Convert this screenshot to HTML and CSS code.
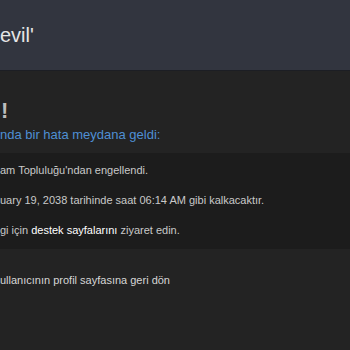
FILE: index.html
```html
<!DOCTYPE html>
<html lang="tr">
<head>
<meta charset="utf-8">
<link rel="stylesheet" href="styles.css">
</head>
<body>
<header class="page-header">
  <h1 class="page-title">evil'</h1>
</header>
<main class="content">
  <h2 class="error-title">!</h2>
  <h3 class="error-subtitle">nda bir hata meydana geldi:</h3>
  <div class="error-box">
    <p class="error-line">am Topluluğu'ndan engellendi.</p>
    <p class="error-line">uary 19, 2038 tarihinde saat 06:14 AM gibi kalkacaktır.</p>
    <p class="error-line">gi için <a class="link" href="#">destek sayfalarını</a> ziyaret edin.</p>
  </div>
  <p class="back-link"><a href="#">ullanıcının profil sayfasına geri dön</a></p>
</main>
</body>
</html>
```

FILE: styles.css
```css
html, body {
  margin: 0;
  padding: 0;
  background: #232323;
  font-family: "Liberation Sans", Arial, sans-serif;
  overflow: hidden;
}
.page-header {
  height: 70px;
  background: #32353f;
  border-bottom: 1px solid #1c1e24;
  display: flex;
  align-items: center;
}
.page-title {
  margin: 0;
  font-size: 20px;
  font-weight: normal;
  color: #e6e6e6;
  line-height: 1;
}
.content {
  padding-top: 28px;
}
.error-title {
  margin: 0;
  font-size: 22px;
  font-weight: bold;
  color: #bdbdbd;
  line-height: 24px;
  padding-left: 1px;
}
.error-subtitle {
  margin: 3px 0 0;
  font-size: 13px;
  font-weight: normal;
  color: #4f8fd4;
  line-height: 18px;
}
.error-box {
  margin-top: 9px;
  background: #1c1c1c;
  padding: 2px 0 4px;
}
.error-line {
  margin: 0;
  font-size: 11px;
  line-height: 30px;
  color: #c9c9c9;
}
.link {
  color: #ffffff;
  text-decoration: none;
}
.back-link {
  margin: 22px 0 0;
  font-size: 11px;
  line-height: 18px;
}
.back-link a {
  color: #d6d6d6;
  text-decoration: none;
}
```
